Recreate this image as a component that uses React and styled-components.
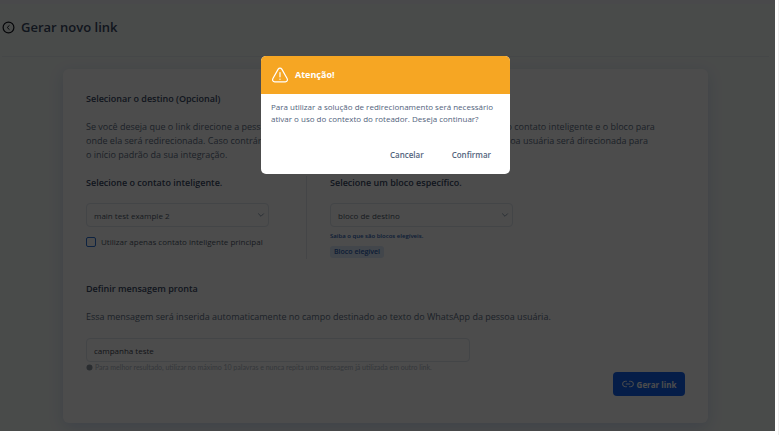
import React, { useState } from "react";
import styled, { createGlobalStyle } from "styled-components";

const GlobalStyle = createGlobalStyle`
  * {
    box-sizing: border-box;
  }

  body {
    margin: 0;
    background: #fff;
    color: #3a4a65;
    font-family: "Open Sans", "Noto Sans", sans-serif;
    font-size: 9px;
  }

  h1, h2, p {
    margin: 0;
  }

  button, input, select {
    font-family: inherit;
  }
`;

const Window = styled.div`
  min-height: 100vh;
  padding: 0 3px 4px 0;
  border-right: 1px solid #eee;
`;

const Page = styled.div`
  position: relative;
  min-height: calc(100vh - 4px);
  padding-top: 4px;
  background: linear-gradient(#f6f6fa 4px, #f6faf8 4px);
  overflow: hidden;
`;

const Header = styled.header`
  display: flex;
  align-items: center;
  gap: 6px;
  height: 53px;
  margin: 0 6px 0 2px;
  padding-bottom: 6px;
  border-bottom: 1px solid #e8edf0;

  h1 {
    font-size: 13px;
    line-height: 20px;
    font-weight: 600;
  }
`;

const BackButton = styled.button`
  display: flex;
  padding: 0;
  border: none;
  background: none;
  color: #10141c;
  cursor: pointer;
`;

const Card = styled.main`
  margin: 12px 67px 8px 63px;
  padding: 23px 23px 27px;
  background: #fff;
  border-radius: 6px;
  box-shadow: 0 4px 16px #cfdcf0;
`;

const Title = styled.h2`
  font-size: 9px;
  line-height: 14px;
  font-weight: 600;
`;

const Text = styled.p`
  margin: 14px 0;
  line-height: 14px;
  color: #607086;
  white-space: nowrap;
`;

const Columns = styled.div`
  display: grid;
  grid-template-columns: 221px 1fr;
  gap: 23px;
  margin-bottom: 23px;
`;

const Column = styled.div`
  display: flex;
  flex-direction: column;
  align-items: flex-start;
  min-height: 83px;
  border-right: ${props => (props.$divider ? "1px solid #e3e8ee" : "none")};
`;

const Label = styled.label`
  margin-bottom: 13px;
  line-height: 14px;
  font-weight: 600;
`;

const SelectBox = styled.div`
  position: relative;
  width: 183px;

  svg {
    position: absolute;
    top: 8px;
    right: 4px;
    color: #8ca0b3;
    pointer-events: none;
  }
`;

const Select = styled.select`
  display: block;
  width: 100%;
  height: 24px;
  padding: 0 20px 0 7px;
  appearance: none;
  background: #fff;
  border: 1px solid #dfe6ee;
  border-radius: 4px;
  color: #505b6b;
  font-size: 8px;
`;

const CheckLabel = styled.label`
  display: flex;
  align-items: center;
  gap: 5px;
  margin-top: 9px;
  line-height: 12px;
  font-size: 8px;
  color: #505b6b;
`;

const Checkbox = styled.input`
  width: 10px;
  height: 10px;
  margin: 0;
  appearance: none;
  background: #fff;
  border: 1px solid #2c72d8;
  border-radius: 2px;
`;

const HelpLink = styled.a`
  margin-top: 5px;
  line-height: 8px;
  font-size: 6px;
  font-weight: 600;
  color: #2c62b4;
  text-decoration: none;
`;

const Badge = styled.span`
  margin-top: 6px;
  padding: 0 4px;
  line-height: 12px;
  font-size: 7px;
  font-weight: 600;
  background: #dce9fa;
  border-radius: 3px;
  color: #2c62b4;
`;

const MessageInput = styled.input`
  display: block;
  width: 384px;
  max-width: 100%;
  height: 24px;
  padding: 0 7px;
  background: #fff;
  border: 1px solid #dfe6ee;
  border-radius: 4px;
  color: #3f4652;
  font-size: 8px;
`;

const Hint = styled.p`
  display: flex;
  align-items: center;
  gap: 2px;
  line-height: 10px;
  font-family: "Lato", sans-serif;
  font-size: 7px;
  color: #b0bac6;
`;

const Footer = styled.div`
  display: flex;
  justify-content: flex-end;
`;

const PrimaryButton = styled.button`
  display: flex;
  align-items: center;
  justify-content: center;
  gap: 3px;
  width: 72px;
  height: 24px;
  padding: 0;
  background: #1262f0;
  border: none;
  border-radius: 4px;
  color: #fff;
  font-size: 8px;
  font-weight: 700;
  white-space: nowrap;
  cursor: pointer;
`;

const Backdrop = styled.div`
  position: absolute;
  inset: 0;
  display: flex;
  align-items: flex-start;
  justify-content: center;
  padding: 56px 4px 0 0;
  background: rgba(0, 0, 0, 0.7);
`;

const Modal = styled.div`
  width: 249px;
  background: #fff;
  border-radius: 5px;
  overflow: hidden;
`;

const ModalHeader = styled.div`
  display: flex;
  align-items: center;
  gap: 6px;
  height: 38px;
  padding: 0 10px;
  background: #f6a623;
  color: #fff;

  h2 {
    font-size: 9px;
    line-height: 14px;
    font-weight: 700;
  }
`;

const ModalText = styled.p`
  padding: 7px 10px 0;
  line-height: 12px;
  font-size: 8px;
  color: #52637c;
  white-space: nowrap;
`;

const ModalActions = styled.div`
  display: flex;
  justify-content: flex-end;
  gap: 28px;
  padding: 22px 19px 11px;
`;

const TextButton = styled.button`
  padding: 0;
  border: none;
  background: none;
  color: #52637c;
  font-size: 8px;
  line-height: 16px;
  font-weight: 600;
  cursor: pointer;
`;

const BackIcon = () => (
  <svg width="13" height="13" viewBox="0 0 13 13" fill="none" stroke="currentColor">
    <circle cx="6.5" cy="6.5" r="5.4" strokeWidth="1.2" />
    <path d="M7.5 4.3 5.2 6.5l2.3 2.2" />
  </svg>
);

const Chevron = () => (
  <svg width="8" height="8" viewBox="0 0 8 8" fill="none" stroke="currentColor">
    <path d="M1.2 2.5 4 5.3l2.8-2.8" />
  </svg>
);

const LinkIcon = () => (
  <svg width="12" height="8" viewBox="0 0 12 8" fill="none" stroke="currentColor">
    <path d="M4.8 1.3H3.3a2.7 2.7 0 0 0 0 5.4h1.5M7.2 1.3h1.5a2.7 2.7 0 0 1 0 5.4H7.2M3.8 4h4.4" />
  </svg>
);

const WarningIcon = () => (
  <svg
    width="18"
    height="16"
    viewBox="0 0 18 16"
    fill="none"
    stroke="currentColor"
    strokeWidth="1.2"
    strokeLinecap="round"
    strokeLinejoin="round"
  >
    <path d="M7.2 2.1 1.9 11.5c-.9 1.6 0 3.3 1.8 3.3h10.6c1.8 0 2.7-1.7 1.8-3.3L10.8 2.1c-.8-1.4-2.8-1.4-3.6 0Z" />
    <path d="M9 5.5v4.3M9 12.1v.2" />
  </svg>
);

const DotIcon = () => (
  <svg width="7" height="7" viewBox="0 0 7 7">
    <circle cx="3.5" cy="3.5" r="3" fill="#8c96a2" />
  </svg>
);

const App = () => {
  const [open, setOpen] = useState(true);
  const close = () => setOpen(false);

  return (
    <Window>
      <GlobalStyle />
      <Page>
        <Header>
          <BackButton aria-label="Voltar">
            <BackIcon />
          </BackButton>
          <h1>Gerar novo link</h1>
        </Header>
        <Card>
          <Title>Selecionar o destino (Opcional)</Title>
          <Text>
            Se você deseja que o link direcione a pessoa usuária para algum bloco específico do fluxo, selecione o contato inteligente e o bloco para
            <br />
            onde ela será redirecionada. Caso contrário, deixe todos os campos abaixo em branco e assim a pessoa usuária será direcionada para
            <br />
            o início padrão da sua integração.
          </Text>
          <Columns>
            <Column $divider>
              <Label htmlFor="contact">Selecione o contato inteligente.</Label>
              <SelectBox>
                <Select id="contact">
                  <option>main test example 2</option>
                </Select>
                <Chevron />
              </SelectBox>
              <CheckLabel>
                <Checkbox type="checkbox" />
                Utilizar apenas contato inteligente principal
              </CheckLabel>
            </Column>
            <Column>
              <Label htmlFor="block">Selecione um bloco específico.</Label>
              <SelectBox>
                <Select id="block">
                  <option>bloco de destino</option>
                </Select>
                <Chevron />
              </SelectBox>
              <HelpLink href="#blocos">Saiba o que são blocos elegíveis.</HelpLink>
              <Badge>Bloco elegível</Badge>
            </Column>
          </Columns>
          <Title as="label" htmlFor="message">
            Definir mensagem pronta
          </Title>
          <Text>
            Essa mensagem será inserida automaticamente no campo destinado ao texto do WhatsApp da pessoa usuária.
          </Text>
          <MessageInput id="message" defaultValue="campanha teste" />
          <Hint>
            <DotIcon />
            Para melhor resultado, utilizar no máximo 10 palavras e nunca repita uma mensagem já utilizada em outro link.
          </Hint>
          <Footer>
            <PrimaryButton>
              <LinkIcon />
              Gerar link
            </PrimaryButton>
          </Footer>
        </Card>
        {open && (
          <Backdrop>
            <Modal role="alertdialog" aria-labelledby="modal-title">
              <ModalHeader>
                <WarningIcon />
                <h2 id="modal-title">Atenção!</h2>
              </ModalHeader>
              <ModalText>
                Para utilizar a solução de redirecionamento será necessário
                <br />
                ativar o uso do contexto do roteador. Deseja continuar?
              </ModalText>
              <ModalActions>
                <TextButton onClick={close}>Cancelar</TextButton>
                <TextButton onClick={close}>Confirmar</TextButton>
              </ModalActions>
            </Modal>
          </Backdrop>
        )}
      </Page>
    </Window>
  );
};

export default App;
